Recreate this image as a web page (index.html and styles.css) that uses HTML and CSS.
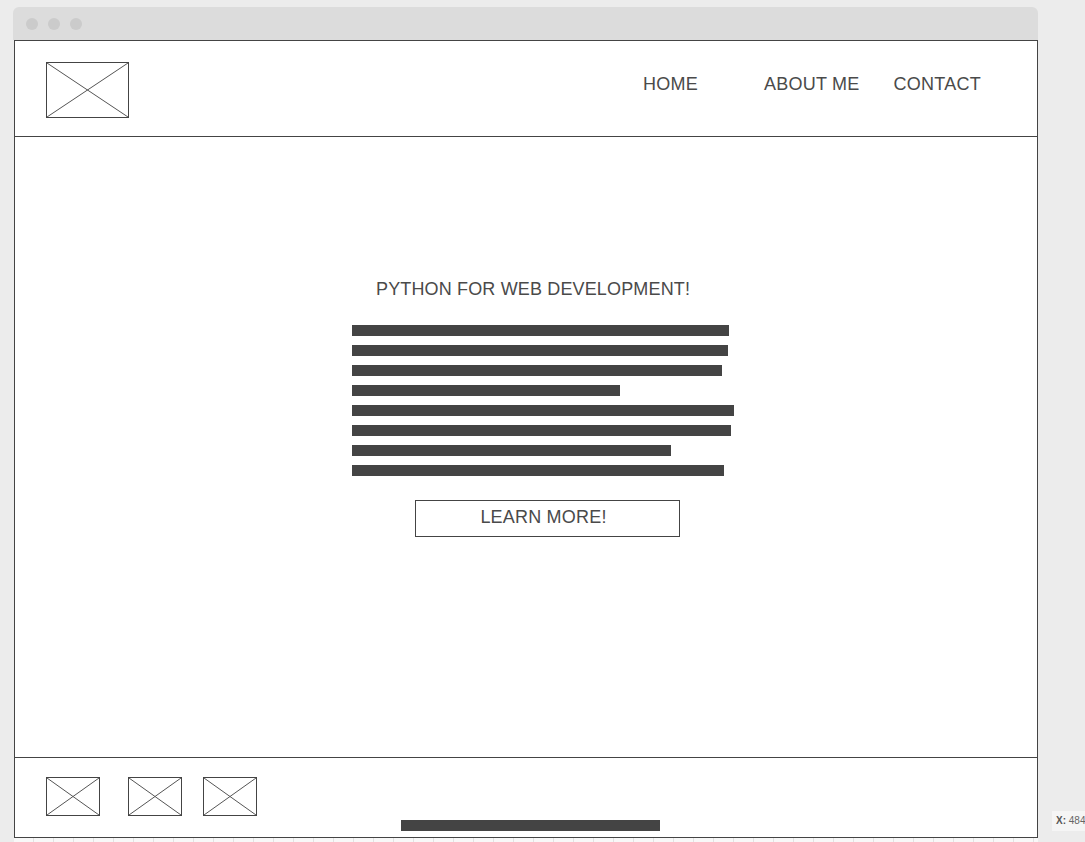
FILE: index.html
```html
<!DOCTYPE html>
<html lang="en">
<head>
    <meta charset="UTF-8">
    <title>Python for Web Development</title>
    <link rel="stylesheet" href="styles.css">
</head>
<body>
    <div class="window">
        <div class="titlebar">
            <span class="dot"></span>
            <span class="dot"></span>
            <span class="dot"></span>
        </div>
        <div class="frame">
            <!-- 头部 -->
            <div class="header">
                <a href="javascript:;" class="logo">
                    <svg width="83" height="56" viewBox="0 0 83 56">
                        <rect x="0.5" y="0.5" width="82" height="55" fill="#fff" stroke="#444"/>
                        <line x1="1" y1="1" x2="82" y2="55" stroke="#555"/>
                        <line x1="82" y1="1" x2="1" y2="55" stroke="#555"/>
                    </svg>
                </a>
                <ul class="nav">
                    <li class="nav-home"><a href="javascript:;">HOME</a></li>
                    <li class="nav-about"><a href="javascript:;">ABOUT ME</a></li>
                    <li class="nav-contact"><a href="javascript:;">CONTACT</a></li>
                </ul>
            </div>
            <!-- 主体 -->
            <div class="main">
                <div class="hero">
                    <h1 class="hero-title">PYTHON FOR WEB DEVELOPMENT!</h1>
                    <div class="hero-text">
                        <div class="line" style="width: 377px"></div>
                        <div class="line" style="width: 376px"></div>
                        <div class="line" style="width: 370px"></div>
                        <div class="line" style="width: 268px"></div>
                        <div class="line" style="width: 382px"></div>
                        <div class="line" style="width: 379px"></div>
                        <div class="line" style="width: 319px"></div>
                        <div class="line" style="width: 372px"></div>
                    </div>
                    <a href="javascript:;" class="hero-button">LEARN MORE!</a>
                </div>
            </div>
            <!-- 底部 -->
            <div class="footer">
                <div class="footer-icons">
                    <svg class="social" width="54" height="39" viewBox="0 0 54 39">
                        <rect x="0.5" y="0.5" width="53" height="38" fill="#fff" stroke="#444"/>
                        <line x1="1" y1="1" x2="53" y2="38" stroke="#555"/>
                        <line x1="53" y1="1" x2="1" y2="38" stroke="#555"/>
                    </svg>
                    <svg class="social social-second" width="54" height="39" viewBox="0 0 54 39">
                        <rect x="0.5" y="0.5" width="53" height="38" fill="#fff" stroke="#444"/>
                        <line x1="1" y1="1" x2="53" y2="38" stroke="#555"/>
                        <line x1="53" y1="1" x2="1" y2="38" stroke="#555"/>
                    </svg>
                    <svg class="social social-third" width="54" height="39" viewBox="0 0 54 39">
                        <rect x="0.5" y="0.5" width="53" height="38" fill="#fff" stroke="#444"/>
                        <line x1="1" y1="1" x2="53" y2="38" stroke="#555"/>
                        <line x1="53" y1="1" x2="1" y2="38" stroke="#555"/>
                    </svg>
                </div>
                <div class="footer-line"></div>
            </div>
        </div>
        <div class="ruler"></div>
    </div>
    <div class="coords"><b>X:</b> 484</div>
</body>
</html>
```

FILE: styles.css
```css
* {
    margin: 0;
    padding: 0;
    box-sizing: border-box;
}

html,
body {
    height: 842px;
    overflow: hidden;
}

body {
    background-color: #ececec;
    font-family: "Liberation Sans", Arial, sans-serif;
    color: #4a4a4a;
}

a {
    text-decoration: none;
    color: #4a4a4a;
}

ul {
    list-style: none;
}

.window {
    width: 1025px;
    margin: 7px 0 0 13px;
}

.titlebar {
    height: 33px;
    display: flex;
    align-items: center;
    gap: 10px;
    padding-left: 13px;
    background-color: #dcdcdc;
    border-radius: 6px 6px 0 0;
}

.dot {
    width: 12px;
    height: 12px;
    border-radius: 50%;
    background-color: #cbcbcb;
}

.frame {
    width: 1024px;
    margin-left: 1px;
    border: 1px solid #444;
    background-color: #fff;
}

/* 头部 */
.header {
    height: 96px;
    display: flex;
    justify-content: space-between;
    align-items: flex-start;
    padding: 21px 56px 0 31px;
    border-bottom: 1px solid #444;
}

.logo svg {
    display: block;
}

.nav {
    display: flex;
    padding-top: 12px;
    font-size: 18px;
    line-height: 21px;
    letter-spacing: 0.25px;
}

.nav-about {
    margin-left: 66px;
}

.nav-contact {
    margin-left: 34px;
}

/* 主体 */
.main {
    height: 621px;
    border-bottom: 1px solid #444;
    padding: 142px 0 0 337px;
}

.hero {
    display: flex;
    flex-direction: column;
    align-items: flex-start;
}

.hero-title {
    margin-left: 24px;
    font-size: 18px;
    line-height: 21px;
    font-weight: normal;
    letter-spacing: 0.15px;
}

.hero-text {
    display: flex;
    flex-direction: column;
    gap: 9px;
    margin-top: 25px;
}

.line {
    height: 11px;
    background-color: #444;
}

.hero-button {
    display: block;
    width: 265px;
    margin: 24px 0 0 63px;
    padding: 6px 8px 8px 0;
    border: 1px solid #444;
    text-align: center;
    font-size: 18px;
    line-height: 21px;
    letter-spacing: 0.2px;
}

/* 底部 */
.footer {
    height: 79px;
    padding: 19px 0 0 31px;
}

.footer-icons {
    display: flex;
}

.social {
    display: block;
}

.social-second {
    margin-left: 28px;
}

.social-third {
    margin-left: 21px;
}

.footer-line {
    width: 259px;
    height: 11px;
    margin: 4px 0 0 355px;
    background-color: #444;
}

.ruler {
    width: 1024px;
    height: 4px;
    margin-left: 1px;
    background-color: #f8f8f8;
    background-image: repeating-linear-gradient(to right, transparent 0, transparent 19px, #e2e2e2 19px, #e2e2e2 20px);
}

.coords {
    position: absolute;
    left: 1052px;
    top: 811px;
    width: 40px;
    height: 20px;
    padding: 4px 0 0 4px;
    background-color: #f5f5f5;
    font-size: 10px;
    line-height: 12px;
    color: #666;
    white-space: nowrap;
}

.coords b {
    color: #555;
}
```
